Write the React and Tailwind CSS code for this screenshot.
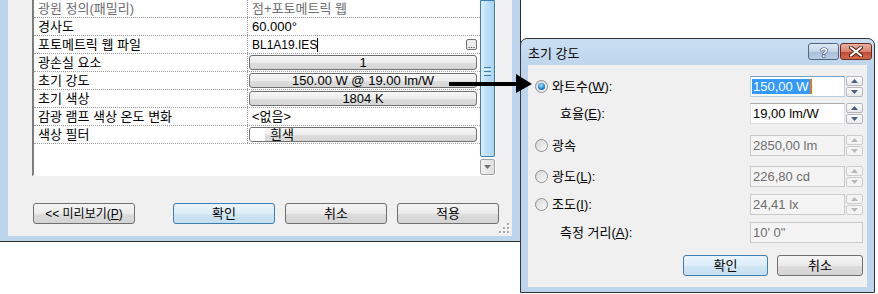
import React from 'react';

const rows = [
  { label: '광원 정의(패밀리)', value: '점+포토메트릭 웹', kind: 'muted' },
  { label: '경사도', value: '60.000°' },
  { label: '포토메트릭 웹 파일', value: 'BL1A19.IES', kind: 'file' },
  { label: '광손실 요소', value: '1', kind: 'button' },
  { label: '초기 강도', value: '150.00 W @ 19.00 lm/W', kind: 'button' },
  { label: '초기 색상', value: '1804 K', kind: 'button' },
  { label: '감광 램프 색상 온도 변화', value: '<없음>' },
  { label: '색상 필터', value: '흰색', kind: 'swatch' },
];

const Btn = ({ children, primary, className = '' }) => (
  <div
    className={`flex items-center justify-center h-[21px] rounded-[3px] border ${
      primary
        ? 'border-[#3c7fb1] bg-[linear-gradient(#eaf4fb,#dcedf8_50%,#cfe6f4_51%,#c4dfef)]'
        : 'border-[#707070] bg-[linear-gradient(#f4f4f4,#ebebeb_50%,#dddddd_51%,#d3d3d3)]'
    } ${className}`}
  >
    {children}
  </div>
);

const Triangle = ({ up, disabled }) => (
  <svg width="7" height="4" viewBox="0 0 7 4">
    <polygon points={up ? '0,4 7,4 3.5,0' : '0,0 7,0 3.5,4'} fill={disabled ? '#b8b8b8' : '#4b5f82'} />
  </svg>
);

const Spinner = ({ disabled }) => (
  <div className="flex flex-col w-[17px] h-full gap-[1px] ml-[1px]">
    {[true, false].map((up) => (
      <div
        key={String(up)}
        className={`flex-1 flex items-center justify-center rounded-[2px] border ${
          disabled ? 'border-[#cdcdcd] bg-[#f4f4f4]' : 'border-[#b3b8bf] bg-[linear-gradient(#fcfcfc,#e9e9e9)]'
        }`}
      >
        <Triangle up={up} disabled={disabled} />
      </div>
    ))}
  </div>
);

const Radio = ({ checked }) => (
  <div className="w-[13px] h-[13px] shrink-0 rounded-full border border-[#8e8f8f] bg-[linear-gradient(135deg,#d6d6d6,#fbfbfb)] flex items-center justify-center">
    {checked && (
      <div className="w-[7px] h-[7px] rounded-full bg-[radial-gradient(circle_at_45%_35%,#a6eaff,#1d88d2_55%,#0c4d8c)]" />
    )}
  </div>
);

const ValueButton = ({ children }) => (
  <div className="ml-[1px] w-[228px] h-[15px] self-center flex items-center justify-center rounded-[3px] border border-[#707070] bg-[linear-gradient(#f6f6f6,#ececec_50%,#dedede_51%,#d6d6d6)]">
    {children}
  </div>
);

const Cell = ({ row }) => {
  switch (row.kind) {
    case 'muted':
      return <span className="pl-[4px] self-center text-[#6d6d6d]">{row.value}</span>;
    case 'file':
      return (
        <div className="flex flex-1 items-center pl-[4px] pr-[3px]">
          <span className="text-[12px]">{row.value}</span>
          <span className="w-[1px] h-[14px] bg-black" />
          <div className="ml-auto w-[11px] h-[11px] rounded-[2px] border border-[#707070] bg-[#ececec] flex items-end justify-center text-[9px] leading-[8px]">
            ...
          </div>
        </div>
      );
    case 'button':
      return <ValueButton>{row.value}</ValueButton>;
    case 'swatch':
      return (
        <div className="ml-[1px] w-[228px] h-[15px] self-center flex items-center rounded-[3px] border border-[#707070] bg-[linear-gradient(#f6f6f6,#ececec_50%,#dedede_51%,#d6d6d6)] overflow-hidden">
          <div className="w-[15px] h-full bg-white" />
          <span className="ml-[5px]">{row.value}</span>
        </div>
      );
    default:
      return <span className="pl-[4px] self-center">{row.value}</span>;
  }
};

const App = () => {
  return (
    <div className="relative w-[878px] h-[294px] overflow-hidden bg-white text-[13px] leading-none text-black font-['Liberation_Sans','Noto_Sans_CJK_KR',sans-serif]">
      {/* 왼쪽 속성 창 */}
      <div className="absolute left-0 top-0 w-[521px] h-[242px] flex border-r border-b border-[#2b2b2b] bg-[#bcd4ec] px-[8px] pb-[5px]">
        <div className="relative flex-1 flex flex-col bg-[#f0f0f0]">
          <div className="ml-[24px] w-[464px] h-[176px] flex border-l-2 border-l-[#7d7d7d] border-b border-b-white border-r border-r-white bg-white">
            <div className="flex flex-col w-[446px]">
              {rows.map((row) => (
                <div key={row.label} className="flex h-[18px] border-b border-dotted border-[#9a9a9a]">
                  <div
                    className={`w-[214px] flex items-center pl-[4px] border-r border-dotted border-[#9a9a9a] ${
                      row.kind === 'muted' ? 'text-[#6d6d6d]' : ''
                    }`}
                  >
                    {row.label}
                  </div>
                  <div className="flex flex-1">
                    <Cell row={row} />
                  </div>
                </div>
              ))}
            </div>
            {/* 스크롤 막대 */}
            <div className="w-[15px] flex flex-col">
              <div className="relative h-[157px] rounded-b-[2px] border border-[#3c7fb1] bg-[linear-gradient(90deg,#dcefff,#bde0f8_45%,#a8d4f4)]">
                <div className="absolute left-[3px] top-[66px] w-[7px] flex flex-col gap-[1px]">
                  <div className="h-[1px] bg-[#3c7fb1]" />
                  <div className="h-[1px] bg-[#e8f4fc]" />
                  <div className="h-[1px] bg-[#3c7fb1]" />
                  <div className="h-[1px] bg-[#e8f4fc]" />
                  <div className="h-[1px] bg-[#3c7fb1]" />
                </div>
              </div>
              <div className="mt-[2px] h-[16px] rounded-[2px] border border-[#a2a2a2] bg-[linear-gradient(90deg,#f2f2f2,#dedede)] flex items-center justify-center">
                <svg width="7" height="4" viewBox="0 0 7 4">
                  <polygon points="0,0 7,0 3.5,4" fill="#707070" />
                </svg>
              </div>
            </div>
          </div>

          <div className="flex items-center mt-[27px] ml-[25px]">
            <Btn className="w-[102px] text-[12px]">
              {'<< 미리보기('}
              <span className="underline">P</span>)
            </Btn>
            <Btn primary className="w-[102px] ml-[38px]">
              확인
            </Btn>
            <Btn className="w-[102px] ml-[10px]">취소</Btn>
            <Btn className="w-[102px] ml-[10px]">적용</Btn>
          </div>

          <svg className="absolute right-[2px] bottom-[2px]" width="11" height="11" viewBox="0 0 11 11">
            {[
              [8, 0],
              [8, 4],
              [4, 4],
              [8, 8],
              [4, 8],
              [0, 8],
            ].map(([x, y]) => (
              <g key={`${x}-${y}`}>
                <rect x={x + 1} y={y + 1} width="2" height="2" fill="#ffffff" />
                <rect x={x} y={y} width="2" height="2" fill="#a8a8a8" />
              </g>
            ))}
          </svg>
        </div>
      </div>

      {/* 초기 강도 대화상자 */}
      <div className="absolute left-[520px] top-[38px] w-[355px] h-[255px] flex flex-col rounded-t-[7px] border border-[#343434] bg-[linear-gradient(#cadef2,#bcd4ec_12%,#bcd4ec)] px-[7px] pb-[5px]">
        <div className="h-[26px] flex items-start shrink-0">
          <span className="mt-[8px]">초기 강도</span>
          <div className="ml-auto mr-[-5px] mt-[4px] flex gap-[1px]">
            <div className="w-[31px] h-[17px] rounded-[3px] border border-[#4f6580] bg-[linear-gradient(#e1eaf5,#c5d5e8_50%,#a9bfd9_51%,#b9cde3)] flex items-center justify-center">
              <svg width="12" height="14" viewBox="0 0 12 14">
                <text x="6" y="12" textAnchor="middle" fontSize="13" fontWeight="bold" fontFamily="Liberation Sans, sans-serif" fill="#ffffff" stroke="#2b4466" strokeWidth="1.2" paintOrder="stroke">
                  ?
                </text>
              </svg>
            </div>
            <div className="w-[32px] h-[17px] rounded-[3px] border border-[#6b2a20] bg-[linear-gradient(#eab0a2,#d98470_50%,#c4462f_51%,#d26a4f)] flex items-center justify-center">
              <svg width="14" height="11" viewBox="0 0 14 11">
                <path d="M2 1.5 L12 9.5 M12 1.5 L2 9.5" stroke="#4a1a12" strokeWidth="4" strokeLinecap="square" />
                <path d="M2 1.5 L12 9.5 M12 1.5 L2 9.5" stroke="#ffffff" strokeWidth="2" strokeLinecap="square" />
              </svg>
            </div>
          </div>
        </div>

        <div className="flex-1 flex flex-col bg-[#f0f0f0] pl-[7px] pr-[4px] pt-[11px]">
          <div className="flex items-center h-[21px]">
            <Radio checked />
            <span className="ml-[4px]">
              와트수(<span className="underline">W</span>):
            </span>
            <div className="ml-auto flex h-full w-[113px]">
              <div className="flex-1 flex items-center border border-[#b5cfe7] border-t-[#6f9dc4] bg-white pl-[1px]">
                <span className="bg-[#3399ff] text-white leading-[15px] px-[1px]">150,00 W</span>
                <span className="w-[2px] h-[15px] bg-[#d97a2b]" />
              </div>
              <Spinner />
            </div>
          </div>

          <div className="flex items-center h-[21px] mt-[6px]">
            <span className="ml-[25px]">
              효율(<span className="underline">E</span>):
            </span>
            <div className="ml-auto flex h-full w-[113px]">
              <div className="flex-1 flex items-center border border-[#dbdfe6] border-t-[#abadb3] bg-white pl-[2px]">
                19,00 lm/W
              </div>
              <Spinner />
            </div>
          </div>

          <div className="flex items-center h-[21px] mt-[11px]">
            <Radio />
            <span className="ml-[4px]">광속</span>
            <div className="ml-auto flex h-full w-[113px] text-[#6d6d6d]">
              <div className="flex-1 flex items-center border border-[#c9c9c9] bg-[#f4f4f4] pl-[2px]">2850,00 lm</div>
              <Spinner disabled />
            </div>
          </div>

          <div className="flex items-center h-[21px] mt-[10px]">
            <Radio />
            <span className="ml-[4px]">
              광도(<span className="underline">L</span>):
            </span>
            <div className="ml-auto flex h-full w-[113px] text-[#6d6d6d]">
              <div className="flex-1 flex items-center border border-[#c9c9c9] bg-[#f4f4f4] pl-[2px]">226,80 cd</div>
              <Spinner disabled />
            </div>
          </div>

          <div className="flex items-center h-[21px] mt-[7px]">
            <Radio />
            <span className="ml-[4px]">
              조도(<span className="underline">I</span>):
            </span>
            <div className="ml-auto flex h-full w-[113px] text-[#6d6d6d]">
              <div className="flex-1 flex items-center border border-[#c9c9c9] bg-[#f4f4f4] pl-[2px]">24,41 lx</div>
              <Spinner disabled />
            </div>
          </div>

          <div className="flex items-center h-[21px] mt-[7px]">
            <span className="ml-[25px]">
              측정 거리(<span className="underline">A</span>):
            </span>
            <div className="ml-auto flex items-center h-full w-[113px] border border-[#c9c9c9] bg-[#f4f4f4] pl-[2px] text-[#6d6d6d]">
              10' 0"
            </div>
          </div>

          <div className="flex justify-end gap-[9px] mt-[12px]">
            <Btn primary className="w-[85px]">
              확인
            </Btn>
            <Btn className="w-[86px]">취소</Btn>
          </div>
        </div>
      </div>

      {/* 화살표 */}
      <svg className="absolute left-[449px] top-[74px]" width="84" height="20" viewBox="0 0 84 20">
        <rect x="0" y="8" width="70" height="4" fill="#000000" />
        <polygon points="67,0 83,10 67,19" fill="#000000" />
      </svg>
    </div>
  );
};

export default App;
